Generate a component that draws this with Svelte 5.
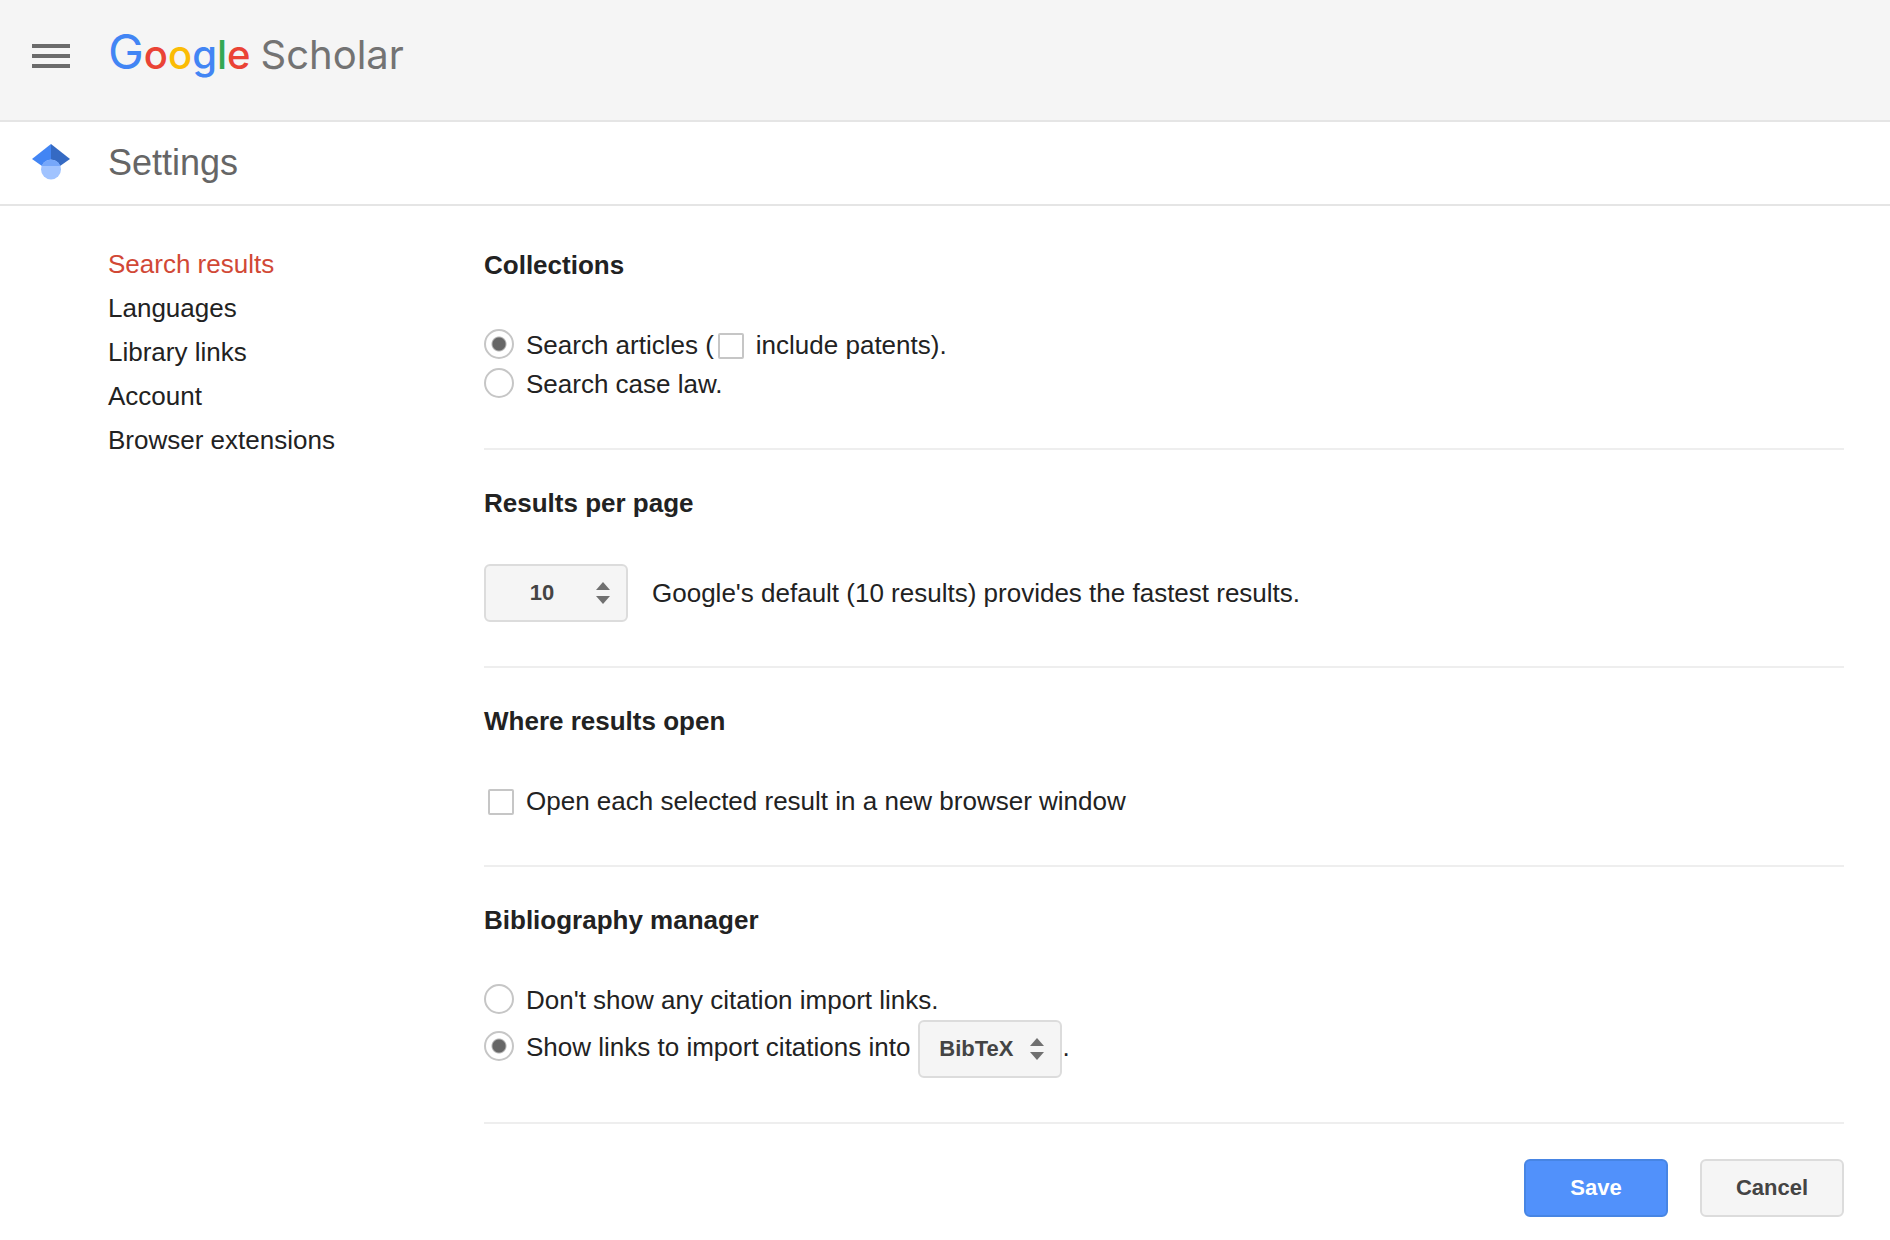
<script>
  const navItems = [
    { id: 'search', label: 'Search results' },
    { id: 'languages', label: 'Languages' },
    { id: 'library', label: 'Library links' },
    { id: 'account', label: 'Account' },
    { id: 'extensions', label: 'Browser extensions' },
  ];

  const formats = ['BibTeX', 'EndNote', 'RefMan', 'RefWorks'];

  let active = $state('search');
  let collection = $state('articles');
  let patents = $state(false);
  let perPage = $state('10');
  let newWindow = $state(false);
  let citations = $state('show');
  let format = $state('BibTeX');

  function reset() {
    collection = 'articles';
    patents = false;
    perPage = '10';
    newWindow = false;
    citations = 'show';
    format = 'BibTeX';
  }
</script>

{#snippet arrows()}
  <svg class="arrows" width="14" height="22" viewBox="0 0 14 22" aria-hidden="true">
    <path d="M7 0 14 8H0zM0 14h14l-7 8z" fill="#707070" />
  </svg>
{/snippet}

<header class="top">
  <button class="menu" type="button" aria-label="Menu">
    <svg width="38" height="24" viewBox="0 0 38 24" aria-hidden="true">
      <path d="M0 0h38v4H0zM0 10h38v4H0zM0 20h38v4H0z" fill="#6b6b6b" />
    </svg>
  </button>
  <a class="logo" href="#home" aria-label="Google Scholar">
    <span class="google"><span class="blue initial">G</span><span class="red">o</span><span class="yellow">o</span><span class="blue">g</span><span class="green">l</span><span class="red">e</span></span>
    <span class="scholar">Scholar</span>
  </a>
</header>

<div class="title">
  <svg width="38" height="40" viewBox="0 0 38 40" aria-hidden="true">
    <path d="M19 1v22H10L0 16z" fill="#4285f4" />
    <path d="M19 1v22h9l10-7z" fill="#356ac3" />
    <circle cx="19" cy="26.500" r="10" fill="#a0c3ff" />
    <path d="M9.700 23a10 10 0 0 1 18.600 0z" fill="#76a7fa" />
  </svg>
  <h1>Settings</h1>
</div>

<div class="page">
  <nav>
    {#each navItems as item}
      <a
        href="#{item.id}"
        class:active={active === item.id}
        onclick={() => (active = item.id)}>{item.label}</a>
    {/each}
  </nav>

  <form onsubmit={(e) => e.preventDefault()}>
    <section>
      <h2>Collections</h2>
      <div class="row">
        <input type="radio" id="articles" value="articles" bind:group={collection} />
        <label for="articles">Search articles (</label>
        <input type="checkbox" id="patents" bind:checked={patents} />
        <label for="patents">include patents).</label>
      </div>
      <div class="row">
        <input type="radio" id="caselaw" value="caselaw" bind:group={collection} />
        <label for="caselaw">Search case law.</label>
      </div>
    </section>

    <section>
      <h2>Results per page</h2>
      <div class="per-page">
        <div class="select">
          <select id="per-page" bind:value={perPage}>
            <option>10</option>
            <option>20</option>
          </select>
          {@render arrows()}
        </div>
        <label for="per-page">Google's default (10 results) provides the fastest results.</label>
      </div>
    </section>

    <section>
      <h2>Where results open</h2>
      <div class="row">
        <input type="checkbox" id="new-window" bind:checked={newWindow} />
        <label for="new-window">Open each selected result in a new browser window</label>
      </div>
    </section>

    <section>
      <h2>Bibliography manager</h2>
      <div class="row">
        <input type="radio" id="cite-none" value="none" bind:group={citations} />
        <label for="cite-none">Don't show any citation import links.</label>
      </div>
      <div class="import">
        <div class="row">
          <input type="radio" id="cite-show" value="show" bind:group={citations} />
          <label for="cite-show">Show links to import citations into</label>
        </div>
        <div class="select">
          <select aria-label="Citation format" bind:value={format}>
            {#each formats as name}
              <option>{name}</option>
            {/each}
          </select>
          {@render arrows()}
        </div>
        <span>.</span>
      </div>
    </section>

    <div class="actions">
      <button class="btn primary" type="submit">Save</button>
      <button class="btn" type="button" onclick={reset}>Cancel</button>
    </div>
  </form>
</div>

<style>
  :global(body) {
    margin: 0;
    background: #fff;
    color: #222;
    font-family: "Liberation Sans", Arial, sans-serif;
    font-size: 26px;
  }

  .top,
  .title {
    display: flex;
    align-items: center;
    gap: 38px;
    padding: 0 32px;
  }

  .top {
    height: 112px;
    padding-bottom: 8px;
    background: #f5f5f5;
    border-bottom: 2px solid #e5e5e5;
  }

  .menu {
    display: flex;
    padding: 0;
    border: 0;
    background: none;
    cursor: pointer;
  }

  .logo {
    display: flex;
    align-items: baseline;
    gap: 10px;
    padding-bottom: 6px;
    font-family: Inter, sans-serif;
    font-size: 40px;
    line-height: 60px;
    text-decoration: none;
  }

  .google {
    font-weight: 500;
  }

  .initial {
    font-size: 48px;
    font-weight: 400;
  }

  .scholar {
    color: #737373;
  }

  .blue {
    color: #4285f4;
  }

  .red {
    color: #ea4335;
  }

  .yellow {
    color: #fbbc05;
  }

  .green {
    color: #34a853;
  }

  .title {
    height: 82px;
    border-bottom: 2px solid #e5e5e5;
  }

  h1 {
    margin: 0;
    font-size: 36px;
    font-weight: normal;
    color: #666;
  }

  .page {
    display: flex;
    padding: 6px 46px 23px 108px;
  }

  nav {
    display: flex;
    flex-direction: column;
    flex: 0 0 376px;
    padding-top: 30px;
  }

  nav a {
    color: #222;
    line-height: 44px;
    text-decoration: none;
  }

  nav a.active {
    color: #d14836;
  }

  form {
    flex: 1;
    min-width: 0;
  }

  section {
    padding: 38px 0 44px;
    border-bottom: 2px solid #eee;
  }

  h2 {
    margin: 0 0 46px;
    font-size: 26px;
    line-height: 30px;
  }

  .row {
    display: flex;
    align-items: center;
    line-height: 39px;
  }

  input {
    appearance: none;
    box-sizing: border-box;
    flex: none;
    border: 2px solid #c6c6c6;
    background: #fff;
    cursor: pointer;
  }

  input[type="radio"] {
    width: 30px;
    height: 30px;
    margin: 0 12px 3px 0;
    border-radius: 50%;
  }

  input[type="radio"]:checked {
    background: radial-gradient(circle, #666 6px, #fff 8px);
  }

  input[type="checkbox"] {
    width: 26px;
    height: 26px;
    margin: 0 12px 0 4px;
    border-radius: 2px;
  }

  input[type="checkbox"]:checked {
    background: #666;
    box-shadow: inset 0 0 0 4px #fff;
  }

  .per-page {
    display: flex;
    align-items: center;
    gap: 24px;
  }

  .import {
    display: flex;
    align-items: flex-start;
  }

  .import,
  .import .row {
    line-height: 54px;
  }

  .import .select {
    margin-left: 8px;
  }

  .select {
    display: grid;
    align-items: center;
  }

  select,
  .arrows {
    grid-area: 1 / 1;
  }

  .arrows {
    justify-self: end;
    margin-right: 18px;
    pointer-events: none;
  }

  select,
  .btn {
    box-sizing: border-box;
    width: 144px;
    height: 58px;
    border: 2px solid #dcdcdc;
    border-radius: 6px;
    background: #f5f5f5;
    color: #444;
    font-family: inherit;
    font-size: 22px;
    font-weight: bold;
    cursor: pointer;
  }

  select {
    appearance: none;
    padding: 0 28px 2px 0;
    text-align: center;
    text-align-last: center;
  }

  .actions {
    display: flex;
    justify-content: flex-end;
    gap: 32px;
    padding-top: 35px;
  }

  .btn {
    padding: 0;
  }

  .primary {
    border-color: #4785e4;
    background: #5191fb;
    color: #fff;
  }
</style>
